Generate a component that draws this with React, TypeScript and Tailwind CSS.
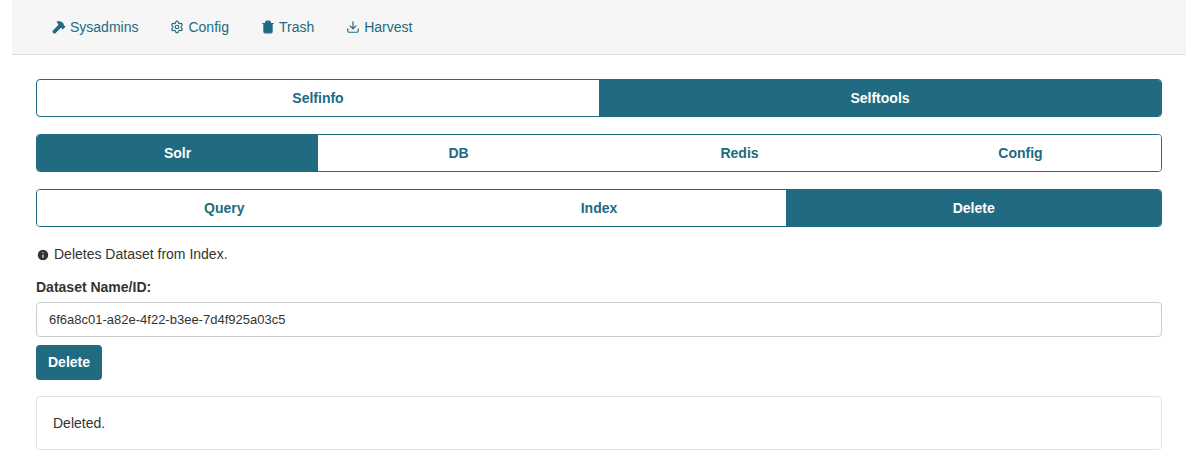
import { Hammer, Settings, Trash2, Download, Info } from "lucide-react";

const Tabs = ({ items, active }: { items: string[]; active: string }) => (
  <div className="flex h-[38px] border border-[#206b82] rounded-[4px] overflow-hidden">
    {items.map((t) => (
      <div
        key={t}
        className={`flex-1 flex items-center justify-center text-[14px] font-bold ${
          t === active ? "bg-[#206b82] text-white" : "bg-white text-[#206b82]"
        }`}
      >
        {t}
      </div>
    ))}
  </div>
);

export default function App() {
  return (
    <div className="bg-white w-[1198px] h-[467px] px-3" style={{ fontFamily: '"Liberation Sans", Arial, sans-serif' }}>
      {/* Nav */}
      <div className="h-[55px] bg-[#f6f6f6] border-b border-[#dddddd] flex items-center gap-8 pl-10 text-[14px] text-[#206b82]">
        <span className="flex items-center gap-1"><Hammer className="w-3.5 h-3.5" fill="currentColor" />Sysadmins</span>
        <span className="flex items-center gap-1"><Settings className="w-3.5 h-3.5" />Config</span>
        <span className="flex items-center gap-1"><Trash2 className="w-3.5 h-3.5" fill="currentColor" />Trash</span>
        <span className="flex items-center gap-1"><Download className="w-3.5 h-3.5" />Harvest</span>
      </div>
      <div className="px-6 pt-6 flex flex-col">
        <div className="grid grid-cols-2 h-[38px] border border-[#206b82] rounded-[4px] overflow-hidden text-[14px] font-bold">
          <div className="flex items-center justify-center text-[#206b82]">Selfinfo</div>
          <div className="flex items-center justify-center bg-[#206b82] text-white">Selftools</div>
        </div>
        <div className="mt-[17px]"><Tabs items={["Solr", "DB", "Redis", "Config"]} active="Solr" /></div>
        <div className="mt-[17px]"><Tabs items={["Query", "Index", "Delete"]} active="Delete" /></div>
        <div className="mt-[17px] flex items-center gap-1 text-[14px] text-[#333]">
          <Info className="w-3.5 h-3.5 fill-[#333] text-white" />Deletes Dataset from Index.
        </div>
        <div className="mt-[12px] text-[14px] font-bold text-[#333]">Dataset Name/ID:</div>
        <div className="mt-[4px] h-[35px] border border-[#cccccc] rounded-[4px] flex items-center px-3 text-[13px] text-[#333]">
          6f6a8c01-a82e-4f22-b3ee-7d4f925a03c5
        </div>
        <div className="mt-[8px]">
          <button className="h-[35px] px-3 rounded-[4px] bg-[#206b82] text-white text-[14px] font-bold">Delete</button>
        </div>
        <div className="mt-[16px] h-[54px] border border-[#e3e3e3] rounded-[4px] flex items-center px-4 text-[14px] text-[#333]">
          Deleted.
        </div>
      </div>
    </div>
  );
}
